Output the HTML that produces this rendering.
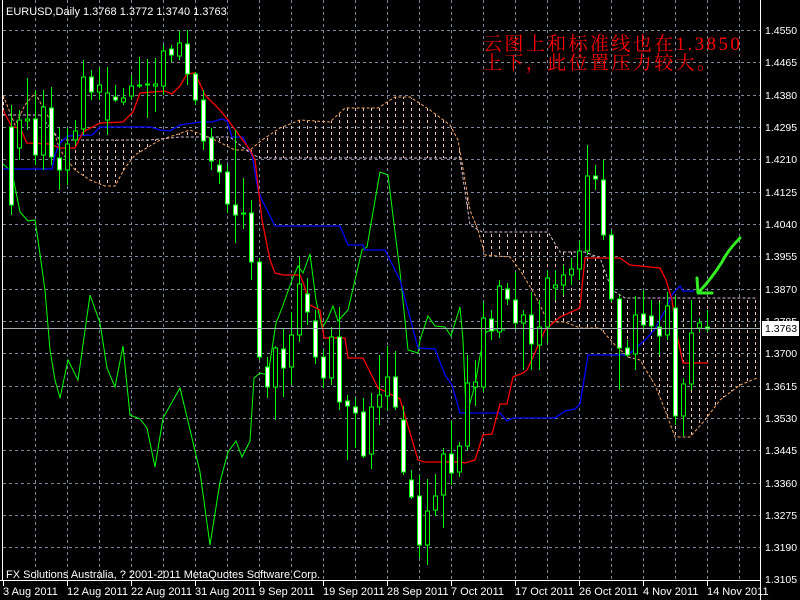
<!DOCTYPE html>
<html><head><meta charset="utf-8"><style>
html,body{margin:0;padding:0;background:#000;}
svg{display:block}
text{font-family:"Liberation Sans",sans-serif;}
g.bd rect{width:4px;}
</style></head><body>
<svg width="800" height="600" viewBox="0 0 800 600" xmlns="http://www.w3.org/2000/svg">
<defs>
<pattern id="h" x="0" y="0" width="8" height="6" patternUnits="userSpaceOnUse">
<line x1="3.5" y1="0" x2="3.5" y2="3" stroke="#ecc8b8" stroke-width="1"/>
</pattern>
<clipPath id="c"><rect x="3" y="0" width="757" height="580"/></clipPath>
</defs>
<rect width="800" height="600" fill="#000"/>
<g stroke="#7a8899" stroke-width="1" stroke-dasharray="3,3" fill="none">
<path d="M3 30.5H760M3 62.5H760M3 95.5H760M3 127.5H760M3 159.5H760M3 192.5H760M3 224.5H760M3 256.5H760M3 289.5H760M3 321.5H760M3 353.5H760M3 386.5H760M3 418.5H760M3 450.5H760M3 483.5H760M3 515.5H760M3 547.5H760"/>
<path d="M35.5 0V580M67.5 0V580M99.5 0V580M131.5 0V580M163.5 0V580M195.5 0V580M227.5 0V580M259.5 0V580M291.5 0V580M323.5 0V580M355.5 0V580M387.5 0V580M419.5 0V580M451.5 0V580M483.5 0V580M515.5 0V580M547.5 0V580M579.5 0V580M611.5 0V580M643.5 0V580M675.5 0V580M707.5 0V580M739.5 0V580"/>
</g>
<g clip-path="url(#c)">
<path fill="url(#h)" fill-rule="evenodd" d="M3 95L15 125L25 105L35 93L50 120L60 150L75 170L90 180L105 186L115 186L125 168L135 155L160 140L190 130L215 140L235 150L250 150L262 140L280 128L300 120L330 122L345 108L378 108L395 97L410 97L430 110L450 125L458 140L465 180L470 210L478 230L485 255L510 257L520 270L535 295L548 322L565 322L580 328L600 328L615 345L628 357L640 360L655 385L665 410L675 437L690 437L705 420L720 400L740 385L757 378L757 298L625 298L612 290L600 258L585 252L560 252L548 232L482 232L470 225L460 158L260 158L250 153L230 137L180 137L150 140L60 140L40 115L3 115Z"/>
<polyline fill="none" stroke="#f4a460" stroke-width="1" stroke-dasharray="3,2" points="3,95 15,125 25,105 35,93 50,120 60,150 75,170 90,180 105,186 115,186 125,168 135,155 160,140 190,130 215,140 235,150 250,150 262,140 280,128 300,120 330,122 345,108 378,108 395,97 410,97 430,110 450,125 458,140 465,180 470,210 478,230 485,255 510,257 520,270 535,295 548,322 565,322 580,328 600,328 615,345 628,357 640,360 655,385 665,410 675,437 690,437 705,420 720,400 740,385 757,378"/>
<polyline fill="none" stroke="#d8bfd8" stroke-width="1" stroke-dasharray="3,2" points="3,115 40,115 60,140 150,140 180,137 230,137 250,153 260,158 460,158 470,225 482,232 548,232 560,252 585,252 600,258 612,290 625,298 757,298"/>
<polyline fill="none" stroke="#00ff00" stroke-width="1" points="3,164 12,172 20,212 28,221 35,220 38,240 45,290 50,350 55,380 60,398 68,360 78,380 90,295 100,323 107,368 115,387 123,346 130,415 140,419 147,428 155,467 163,418 180,388 187,417 200,472 210,545 220,482 228,452 236,441 242,457 250,441 254,378 260,373 268,375 276,323 282,308 292,280 298,266 303,273 310,254 316,300 322,328 328,318 333,306 338,321 348,310 355,280 362,250 367,247 373,212 380,172 388,175 395,232 400,272 408,350 418,353 420,340 428,316 435,326 445,327 451,336 460,307 463,340 466,410 470,403 475,385 480,356 486,332 492,330 500,330 505,330"/>
<polyline fill="none" stroke="#0000ff" stroke-width="1.3" points="3,169 52,169 55,155 60,143 68,136 92,135 100,127 150,127 160,130 170,131 180,125 200,122 212,122 222,119 227,121 232,137 243,137 248,148 252,155 258,190 262,200 275,226 340,226 348,245 363,245 365,250 385,250 390,260 400,280 418,348 435,349 445,375 452,385 460,413 500,413 507,421 513,418 555,418 565,411 575,409 580,404 585,374 588,355 628,355 645,340 655,329 667,307 672,295 676,290 680,286 683,291 694,291"/>
<polyline fill="none" stroke="#ff0000" stroke-width="1.3" points="3,110 12,127 20,128 27,143 50,144 60,148 75,148 83,132 100,123 123,122 133,112 140,93 165,91 172,94 180,86 187,74 195,73 205,95 220,110 228,120 250,150 255,160 258,185 262,220 270,260 275,273 283,275 300,275 304,285 310,305 320,310 324,338 345,338 348,358 363,358 378,388 400,399 418,460 425,462 460,462 465,463 475,460 483,435 492,434 500,404 507,404 513,377 523,373 527,370 533,357 545,330 560,317 578,309 580,307 585,258 612,258 620,258 630,265 660,268 666,280 672,300 676,330 683,363 708,363"/>
<path stroke="#00ff00" stroke-width="1" fill="none" d="M11.5 105V215M19.5 110V160M27.5 78V130M35.5 90V165M43.5 90V170M51.5 87V165M59.5 128V190M67.5 128V185M75.5 120V145M83.5 60V135M91.5 70V100M99.5 68V100M107.5 67V135M115.5 85V102M123.5 88V105M131.5 75V100M139.5 57V88M147.5 59V118M155.5 58V112M163.5 45V95M171.5 45V62M179.5 31V60M187.5 30V85M195.5 72V105M203.5 90V150M211.5 128V170M219.5 160V184M227.5 165V213M235.5 130V243M243.5 178V229M251.5 200V280M259.5 258V360M267.5 357V398M275.5 346V420M283.5 329V397M291.5 312V385M299.5 257V342M307.5 278V325M315.5 310V364M323.5 350V388M331.5 327V385M339.5 307V410M347.5 395V460M355.5 398V448M363.5 398V458M371.5 393V469M379.5 355V425M387.5 346V410M395.5 351V410M403.5 406V475M411.5 470V499M419.5 475V558M427.5 479V565M435.5 474V516M443.5 448V528M451.5 421V485M459.5 442V477M467.5 355V450M475.5 360V406M483.5 302V392M491.5 310V340M499.5 280V338M507.5 283V305M515.5 272V330M523.5 310V370M531.5 292V370M539.5 300V370M547.5 270V343M555.5 270V300M563.5 265V295M571.5 258V285M579.5 241V280M587.5 145V255M595.5 165V190M603.5 160V240M611.5 230V302M619.5 295V390M627.5 340V357M635.5 296V370M643.5 290V330M651.5 300V330M659.5 302V355M667.5 292V340M675.5 296V425M683.5 378V436M691.5 300V390M699.5 318V332M707.5 310V332"/>
<g class="bd" stroke="#00ff00" stroke-width="1" transform="translate(1 0)">
<g fill="#fff">
<rect x="8.5" y="127" width="6" height="78"/><rect x="32.5" y="119" width="6" height="36"/><rect x="48.5" y="108" width="6" height="49"/><rect x="56.5" y="158" width="6" height="12"/><rect x="88.5" y="77" width="6" height="15"/><rect x="112.5" y="97" width="6" height="3"/><rect x="168.5" y="49" width="6" height="6"/><rect x="184.5" y="44" width="6" height="30"/><rect x="192.5" y="74" width="6" height="26"/><rect x="200.5" y="100" width="6" height="41"/><rect x="208.5" y="138" width="6" height="23"/><rect x="216.5" y="165" width="6" height="7"/><rect x="224.5" y="172" width="6" height="32"/><rect x="232.5" y="205" width="6" height="10"/><rect x="248.5" y="213" width="6" height="49"/><rect x="256.5" y="262" width="6" height="95"/><rect x="264.5" y="367" width="6" height="20"/><rect x="280.5" y="349" width="6" height="19"/><rect x="304.5" y="294" width="6" height="18"/><rect x="312.5" y="321" width="6" height="36"/><rect x="320.5" y="357" width="6" height="21"/><rect x="336.5" y="337" width="6" height="65"/><rect x="344.5" y="401" width="6" height="5"/><rect x="352.5" y="407" width="6" height="6"/><rect x="360.5" y="412" width="6" height="44"/><rect x="392.5" y="377" width="6" height="30"/><rect x="400.5" y="420" width="6" height="52"/><rect x="408.5" y="480" width="6" height="17"/><rect x="416.5" y="496" width="6" height="49"/><rect x="448.5" y="454" width="6" height="19"/><rect x="488.5" y="319" width="6" height="12"/><rect x="504.5" y="289" width="6" height="10"/><rect x="512.5" y="300" width="6" height="23"/><rect x="528.5" y="315" width="6" height="29"/><rect x="592.5" y="176" width="6" height="3"/><rect x="600.5" y="180" width="6" height="55"/><rect x="608.5" y="235" width="6" height="64"/><rect x="616.5" y="299" width="6" height="49"/><rect x="624.5" y="348" width="6" height="7"/><rect x="640.5" y="314" width="6" height="11"/><rect x="648.5" y="316" width="6" height="10"/><rect x="656.5" y="327" width="6" height="9"/><rect x="672.5" y="308" width="6" height="108"/><rect x="704.5" y="327" width="6" height="2"/>
</g>
<g fill="#000">
<rect x="16.5" y="120" width="6" height="28"/><rect x="24.5" y="119" width="6" height="2"/><rect x="40.5" y="107" width="6" height="48"/><rect x="64.5" y="144" width="6" height="26"/><rect x="72.5" y="131" width="6" height="9"/><rect x="80.5" y="77" width="6" height="52"/><rect x="96.5" y="85" width="6" height="7"/><rect x="104.5" y="93" width="6" height="27"/><rect x="120.5" y="98" width="6" height="4"/><rect x="128.5" y="86" width="6" height="10"/><rect x="136.5" y="85" width="6" height="1"/><rect x="144.5" y="84" width="6" height="1"/><rect x="152.5" y="84" width="6" height="2"/><rect x="160.5" y="51" width="6" height="35"/><rect x="176.5" y="43" width="6" height="13"/><rect x="240.5" y="213" width="6" height="1"/><rect x="272.5" y="348" width="6" height="39"/><rect x="288.5" y="335" width="6" height="32"/><rect x="296.5" y="284" width="6" height="51"/><rect x="328.5" y="337" width="6" height="41"/><rect x="368.5" y="407" width="6" height="47"/><rect x="376.5" y="395" width="6" height="12"/><rect x="384.5" y="377" width="6" height="19"/><rect x="424.5" y="511" width="6" height="34"/><rect x="432.5" y="496" width="6" height="14"/><rect x="440.5" y="454" width="6" height="41"/><rect x="456.5" y="446" width="6" height="26"/><rect x="464.5" y="383" width="6" height="63"/><rect x="472.5" y="382" width="6" height="5"/><rect x="480.5" y="318" width="6" height="69"/><rect x="496.5" y="286" width="6" height="46"/><rect x="520.5" y="315" width="6" height="8"/><rect x="536.5" y="327" width="6" height="18"/><rect x="544.5" y="278" width="6" height="49"/><rect x="552.5" y="285" width="6" height="3"/><rect x="560.5" y="275" width="6" height="10"/><rect x="568.5" y="269" width="6" height="6"/><rect x="576.5" y="251" width="6" height="18"/><rect x="584.5" y="176" width="6" height="75"/><rect x="632.5" y="315" width="6" height="39"/><rect x="664.5" y="306" width="6" height="29"/><rect x="680.5" y="384" width="6" height="32"/><rect x="688.5" y="333" width="6" height="51"/><rect x="696.5" y="323" width="6" height="5"/>
</g>
</g>
</g>
<line x1="3" y1="328.5" x2="760" y2="328.5" stroke="#a0a8b0" stroke-width="1"/>
<line x1="2.5" y1="0" x2="2.5" y2="581" stroke="#fff"/>
<line x1="760.5" y1="0" x2="760.5" y2="600" stroke="#fff"/>
<line x1="0" y1="580.5" x2="761" y2="580.5" stroke="#fff"/>
<g stroke="#33ee22" stroke-width="3" fill="none" stroke-linecap="round" stroke-linejoin="round">
<path d="M740 238Q728 250 722 262Q712 278 699 292"/>
<path d="M697 278L698 293L712 293"/>
</g>
<text x="6" y="15" fill="#fff" font-size="11">EURUSD,Daily  1.3768 1.3772 1.3740 1.3763</text>
<text x="483" y="50" fill="#ff0000" font-size="19" style="font-family:'Liberation Serif','Noto Serif CJK SC',serif" letter-spacing="2.4">云图上和标准线也在1.3850</text>
<text x="483" y="69" fill="#ff0000" font-size="19" style="font-family:'Liberation Serif','Noto Serif CJK SC',serif" letter-spacing="2.4">上下，此位置压力较大。</text>
<text x="6" y="578" fill="#fff" font-size="11">FX Solutions Australia, ? 2001-2011 MetaQuotes Software Corp.</text>
<g fill="#fff" font-size="10.5">
<text x="765" y="34">1.4550</text><text x="765" y="66">1.4465</text><text x="765" y="99">1.4380</text><text x="765" y="131">1.4295</text><text x="765" y="163">1.4210</text><text x="765" y="196">1.4125</text><text x="765" y="228">1.4040</text><text x="765" y="260">1.3955</text><text x="765" y="293">1.3870</text><text x="765" y="325">1.3785</text><text x="765" y="357">1.3700</text><text x="765" y="390">1.3615</text><text x="765" y="422">1.3530</text><text x="765" y="454">1.3445</text><text x="765" y="487">1.3360</text><text x="765" y="519">1.3275</text><text x="765" y="551">1.3190</text><text x="765" y="583">1.3105</text>
</g>
<rect x="762" y="321" width="37" height="15" fill="#fff"/>
<text x="765" y="332" fill="#000" font-size="10.5">1.3763</text>
<g stroke="#fff"><path d="M3.5 581V586M67.5 581V586M131.5 581V586M195.5 581V586M259.5 581V586M323.5 581V586M387.5 581V586M451.5 581V586M515.5 581V586M579.5 581V586M643.5 581V586M707.5 581V586"/></g>
<g fill="#fff" font-size="11">
<text x="3" y="595">3 Aug 2011</text><text x="67" y="595">12 Aug 2011</text><text x="131" y="595">22 Aug 2011</text><text x="195" y="595">31 Aug 2011</text><text x="259" y="595">9 Sep 2011</text><text x="323" y="595">19 Sep 2011</text><text x="387" y="595">28 Sep 2011</text><text x="451" y="595">7 Oct 2011</text><text x="515" y="595">17 Oct 2011</text><text x="579" y="595">26 Oct 2011</text><text x="643" y="595">4 Nov 2011</text><text x="707" y="595">14 Nov 2011</text>
</g>
</svg>
</body></html>
